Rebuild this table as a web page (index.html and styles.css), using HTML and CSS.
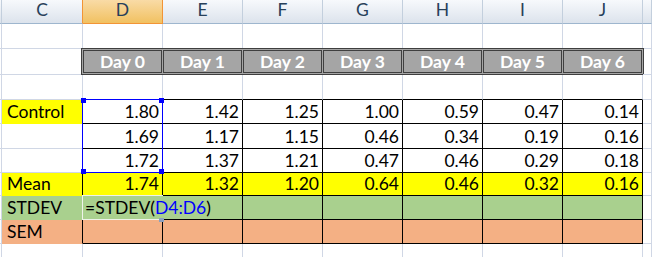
FILE: index.html
```html
<!DOCTYPE html>
<html>
<head>
<meta charset="utf-8">
<link rel="stylesheet" href="styles.css">
</head>
<body>
<div class="sheet">
  <!-- column headers -->
  <div class="c hd"></div>
  <div class="c hd pre">C</div>
  <div class="c hd on">D</div>
  <div class="c hd">E</div>
  <div class="c hd">F</div>
  <div class="c hd">G</div>
  <div class="c hd">H</div>
  <div class="c hd">I</div>
  <div class="c hd">J</div>
  <div class="c hd"></div>

  <!-- row 1 -->
  <div class="c"></div><div class="c"></div>
  <div class="c"></div><div class="c"></div><div class="c"></div><div class="c"></div><div class="c"></div><div class="c"></div><div class="c"></div>
  <div class="c"></div>

  <!-- row 2 : day headers -->
  <div class="c"></div><div class="c"></div>
  <div class="days">
    <div class="day">Day 0</div>
    <div class="day">Day 1</div>
    <div class="day">Day 2</div>
    <div class="day">Day 3</div>
    <div class="day">Day 4</div>
    <div class="day">Day 5</div>
    <div class="day">Day 6</div>
  </div>
  <div class="c"></div>

  <!-- row 3 -->
  <div class="c"></div><div class="c"></div>
  <div class="c t"></div><div class="c t"></div><div class="c t"></div><div class="c t"></div><div class="c t"></div><div class="c t"></div><div class="c t"></div>
  <div class="c"></div>

  <!-- row 4 : Control -->
  <div class="c"></div>
  <div class="c lb y yb lab">Control</div>
  <div class="c b n">1.80</div><div class="c b n">1.42</div><div class="c b n">1.25</div><div class="c b n">1.00</div><div class="c b n">0.59</div><div class="c b n">0.47</div><div class="c b n">0.14</div>
  <div class="c"></div>

  <!-- row 5 -->
  <div class="c"></div>
  <div class="c lb"></div>
  <div class="c b n">1.69</div><div class="c b n">1.17</div><div class="c b n">1.15</div><div class="c b n">0.46</div><div class="c b n">0.34</div><div class="c b n">0.19</div><div class="c b n">0.16</div>
  <div class="c"></div>

  <!-- row 6 -->
  <div class="c"></div>
  <div class="c lb"></div>
  <div class="c b n">1.72</div><div class="c b n">1.37</div><div class="c b n">1.21</div><div class="c b n">0.47</div><div class="c b n">0.46</div><div class="c b n">0.29</div><div class="c b n">0.18</div>
  <div class="c"></div>

  <!-- row 7 : Mean -->
  <div class="c"></div>
  <div class="c lb y yb lab">Mean</div>
  <div class="c b y n">1.74</div><div class="c b y n">1.32</div><div class="c b y n">1.20</div><div class="c b y n">0.64</div><div class="c b y n">0.46</div><div class="c b y n">0.32</div><div class="c b y n">0.16</div>
  <div class="c"></div>

  <!-- row 8 : STDEV -->
  <div class="c"></div>
  <div class="c lb g gb lab">STDEV</div>
  <div class="c b g ed"><span>=STDEV(</span><span class="ref">D4:D6</span><span>)</span><div class="frame"></div><div class="fill"></div></div>
  <div class="c b g"></div><div class="c b g"></div><div class="c b g"></div><div class="c b g"></div><div class="c b g"></div><div class="c b g"></div>
  <div class="c"></div>

  <!-- row 9 : SEM -->
  <div class="c"></div>
  <div class="c lb o ob lab">SEM</div>
  <div class="c b o"></div><div class="c b o"></div><div class="c b o"></div><div class="c b o"></div><div class="c b o"></div><div class="c b o"></div><div class="c b o"></div>
  <div class="c"></div>

  <!-- row 10 -->
  <div class="c nb"></div><div class="c nb"></div>
  <div class="c nb"></div><div class="c nb"></div><div class="c nb"></div><div class="c nb"></div><div class="c nb"></div><div class="c nb"></div><div class="c nb"></div>
  <div class="c nb"></div>

  <!-- formula range highlight -->
  <div class="rng">
    <i class="k tl"></i><i class="k tr"></i><i class="k bl"></i><i class="k br"></i>
  </div>
</div>
</body>
</html>
```

FILE: styles.css
```css
html, body {
  margin: 0;
  padding: 0;
  background: #ffffff;
}

.sheet {
  position: relative;
  width: 652px;
  height: 257px;
  overflow: hidden;
  display: grid;
  grid-template-columns: 2px 81px repeat(7, 80px) 1fr;
  grid-template-rows: 24px 25px 26px 25px 24px 25px 24px 23px 24px 24px 1fr;
  font-family: Lato, "Liberation Sans", sans-serif;
  font-size: 17.5px;
  color: #000000;
}

.c {
  box-sizing: border-box;
  min-width: 0;
  border-right: 1px solid #d0d7e5;
  border-bottom: 1px solid #d0d7e5;
  display: flex;
  align-items: flex-end;
  line-height: 18px;
  white-space: nowrap;
}

.c.nb { border-bottom: 0; }

/* column headers */
.hd {
  background: linear-gradient(#f7f9fc, #dce3ec);
  border-right-color: #c3cfdd;
  border-bottom-color: #9eb6ce;
  justify-content: center;
  color: #27405a;
  padding-bottom: 4px;
}
.hd.pre { border-right-color: #f29436; }
.hd.on {
  background: linear-gradient(#f9dba6, #f1c161);
  border-right-color: #f29436;
  border-bottom-color: #f29436;
}

/* day header band */
.days {
  grid-column: span 7;
  margin: -1px -1px 0 -2px;
  box-sizing: border-box;
  display: flex;
  gap: 1px;
  padding: 1px;
  border: 1px solid #3f3f3f;
  background: #a5a5a5;
}
.day {
  flex: 1;
  box-sizing: border-box;
  border: 1px solid #3f3f3f;
  color: #ffffff;
  font-weight: 700;
  display: flex;
  align-items: center;
  justify-content: center;
}

/* table borders */
.t { border-bottom-color: #000000; }
.b { border-right-color: #000000; border-bottom-color: #000000; }
.lb { border-right-color: #000000; }

/* fills */
.y { background: #ffff00; }
.g { background: #a9d08e; }
.o { background: #f4b084; }
.yb { border-bottom-color: #ffff00; }
.gb { border-bottom-color: #a9d08e; }
.ob { border-bottom-color: #f4b084; }

/* text */
.n {
  justify-content: flex-end;
  padding: 0 3px 2px 0;
}
.lab {
  padding: 0 0 2px 5px;
}

/* cell in edit mode */
.ed {
  position: relative;
  z-index: 1;
  overflow: visible;
  border-right-color: #a9d08e;
  padding: 0 0 2px 2px;
}
.ref { color: #0000ff; }
.frame {
  position: absolute;
  left: -1px;
  top: -1px;
  width: 81px;
  height: 25px;
  box-sizing: border-box;
  border: 1px solid #eef3ea;
  border-right: 0;
}
.fill {
  position: absolute;
  left: 76px;
  top: 22px;
  width: 5px;
  height: 4px;
  background: #8aa0bf;
}

/* formula reference range */
.rng {
  position: absolute;
  left: 82px;
  top: 99px;
  width: 81px;
  height: 74px;
  box-sizing: border-box;
  border: 1px solid #0000ff;
  z-index: 2;
}
.k {
  position: absolute;
  width: 5px;
  height: 5px;
  background: #0000ff;
}
.k.tl { left: -2px; top: -2px; }
.k.tr { left: 76px; top: -2px; }
.k.bl { left: -2px; top: 69px; }
.k.br { left: 76px; top: 69px; }
```
